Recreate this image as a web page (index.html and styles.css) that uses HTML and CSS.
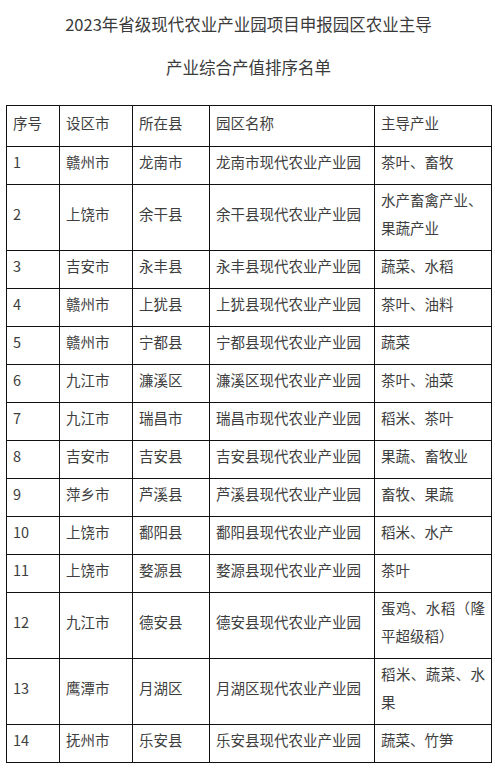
FILE: index.html
```html
<!DOCTYPE html>
<html lang="zh-CN">
<head>
<meta charset="utf-8">
<title>2023年省级现代农业产业园项目申报园区农业主导产业综合产值排序名单</title>
<link rel="stylesheet" href="styles.css">
</head>
<body>
<div class="page">
  <div class="title">
    <p class="title-line">2023年省级现代农业产业园项目申报园区农业主导</p>
    <p class="title-line">产业综合产值排序名单</p>
  </div>
  <table class="list">
    <colgroup>
      <col class="c1"><col class="c2"><col class="c3"><col class="c4"><col class="c5">
    </colgroup>
    <thead>
      <tr class="head"><td>序号</td><td>设区市</td><td>所在县</td><td>园区名称</td><td>主导产业</td></tr>
    </thead>
    <tbody>
      <tr><td>1</td><td>赣州市</td><td>龙南市</td><td>龙南市现代农业产业园</td><td>茶叶、畜牧</td></tr>
      <tr><td>2</td><td>上饶市</td><td>余干县</td><td>余干县现代农业产业园</td><td>水产畜禽产业、果蔬产业</td></tr>
      <tr><td>3</td><td>吉安市</td><td>永丰县</td><td>永丰县现代农业产业园</td><td>蔬菜、水稻</td></tr>
      <tr><td>4</td><td>赣州市</td><td>上犹县</td><td>上犹县现代农业产业园</td><td>茶叶、油料</td></tr>
      <tr><td>5</td><td>赣州市</td><td>宁都县</td><td>宁都县现代农业产业园</td><td>蔬菜</td></tr>
      <tr><td>6</td><td>九江市</td><td>濂溪区</td><td>濂溪区现代农业产业园</td><td>茶叶、油菜</td></tr>
      <tr><td>7</td><td>九江市</td><td>瑞昌市</td><td>瑞昌市现代农业产业园</td><td>稻米、茶叶</td></tr>
      <tr><td>8</td><td>吉安市</td><td>吉安县</td><td>吉安县现代农业产业园</td><td>果蔬、畜牧业</td></tr>
      <tr><td>9</td><td>萍乡市</td><td>芦溪县</td><td>芦溪县现代农业产业园</td><td>畜牧、果蔬</td></tr>
      <tr><td>10</td><td>上饶市</td><td>鄱阳县</td><td>鄱阳县现代农业产业园</td><td>稻米、水产</td></tr>
      <tr><td>11</td><td>上饶市</td><td>婺源县</td><td>婺源县现代农业产业园</td><td>茶叶</td></tr>
      <tr><td>12</td><td>九江市</td><td>德安县</td><td>德安县现代农业产业园</td><td class="just">蛋鸡、水稻（隆平超级稻）</td></tr>
      <tr><td>13</td><td>鹰潭市</td><td>月湖区</td><td>月湖区现代农业产业园</td><td class="just">稻米、蔬菜、水果</td></tr>
      <tr><td>14</td><td>抚州市</td><td>乐安县</td><td>乐安县现代农业产业园</td><td>蔬菜、竹笋</td></tr>
    </tbody>
  </table>
</div>
</body>
</html>
```
FILE: styles.css
```css
html, body {
  margin: 0;
  padding: 0;
  background: #ffffff;
}

body {
  font-family: "Noto Sans CJK SC", "Noto Sans", "Liberation Sans", sans-serif;
  color: #3e3e3e;
}

.page {
  padding: 12px 4px 0 6px;
}

.title {
  text-align: center;
  font-size: 16.5px;
  color: #3a3a3a;
}

.title-line {
  margin: 0;
  line-height: 24px;
}

.title-line + .title-line {
  margin-top: 19px;
}

.list {
  margin-top: 26px;
  width: 485px;
  border-collapse: collapse;
  table-layout: fixed;
  font-size: 14.5px;
}

.c1 { width: 53px; }
.c2 { width: 73px; }
.c3 { width: 77px; }
.c4 { width: 165px; }
.c5 { width: 117px; }

.list td {
  border: 1px solid #111111;
  padding: 1px 6px 8px 6px;
  line-height: 28px;
  vertical-align: middle;
  text-align: left;
  word-break: break-all;
}

.list .head td {
  padding-top: 3px;
  padding-bottom: 9px;
}

.list td.just {
  text-align: justify;
}
```
